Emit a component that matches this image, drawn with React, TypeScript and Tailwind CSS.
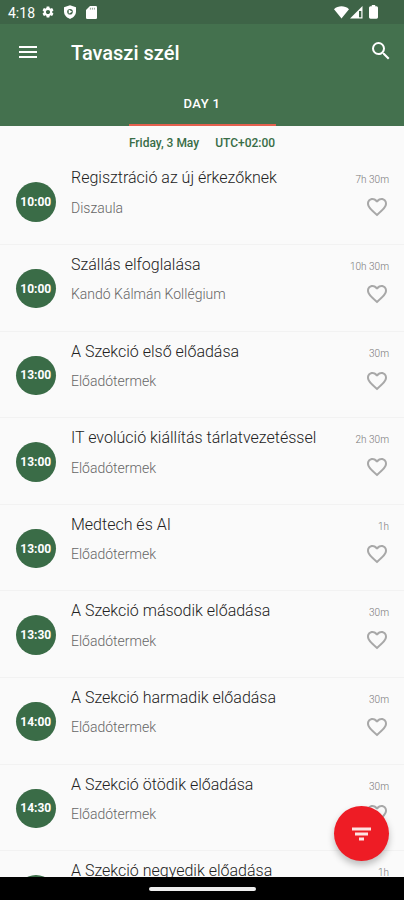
import React from "react";
import { MdSettings, MdSearch, MdMenu, MdFavoriteBorder } from "react-icons/md";

type Talk = { time?: string; title: string; place?: string; length: string };

const talks: Talk[] = [
  { time: "10:00", title: "Regisztráció az új érkezőknek", place: "Diszaula", length: "7h 30m" },
  { time: "10:00", title: "Szállás elfoglalása", place: "Kandó Kálmán Kollégium", length: "10h 30m" },
  { time: "13:00", title: "A Szekció első előadása", place: "Előadótermek", length: "30m" },
  { time: "13:00", title: "IT evolúció kiállítás tárlatvezetéssel", place: "Előadótermek", length: "2h 30m" },
  { time: "13:00", title: "Medtech és AI", place: "Előadótermek", length: "1h" },
  { time: "13:30", title: "A Szekció második előadása", place: "Előadótermek", length: "30m" },
  { time: "14:00", title: "A Szekció harmadik előadása", place: "Előadótermek", length: "30m" },
  { time: "14:30", title: "A Szekció ötödik előadása", place: "Előadótermek", length: "30m" },
  { title: "A Szekció negyedik előadása", length: "1h" },
];

function StatusBar() {
  return (
    <div className="flex h-6 shrink-0 items-center bg-[#3e6447] pl-2 pr-[26px] text-white">
      <span className="mt-px w-[27px] text-[14px] leading-6">4:18</span>
      <MdSettings className="ml-[6px] size-[14px]" />
      <svg className="ml-[8px] h-[14px] w-[14px]" viewBox="0 0 14 14">
        <path d="M7 0.2L13 2.3V6.6C13 10 10.5 12.8 7 13.9C3.5 12.8 1 10 1 6.6V2.3Z" fill="currentColor" />
        <circle cx="7" cy="6.7" r="2.8" fill="#3e6447" />
        <path d="M5.7 4.6L9.2 6.7L5.7 8.8Z" fill="currentColor" />
      </svg>
      <svg className="ml-[9px] h-[13px] w-[11px]" viewBox="0 0 11 13">
        <path d="M4 0H9.7Q11 0 11 1.3V11.7Q11 13 9.7 13H1.3Q0 13 0 11.7V4Z" fill="currentColor" />
        <path d="M4.4 1.8V3.6M6.4 1.8V3.6M8.4 1.8V3.6" stroke="#3e6447" strokeWidth=".6" />
      </svg>
      <div className="flex-1" />
      <svg className="h-[13px] w-[15px]" viewBox="0 0 15 13">
        <path d="M0 3.2C4.2-.6 10.8-.6 15 3.2L7.5 12.5Z" fill="currentColor" />
      </svg>
      <svg className="ml-[1px] h-[13px] w-[13px]" viewBox="0 0 13 13">
        <path d="M12.5 0V12.5H0Z" fill="currentColor" />
        <path d="M9 5H11.3V11.3H9Z" fill="#3e6447" />
      </svg>
      <svg className="ml-[6px] h-[14px] w-[9px]" viewBox="0 0 9 14">
        <path d="M2.8 0H6.2V1.3H7.5Q9 1.3 9 2.8V12.3Q9 13.7 7.5 13.7H1.5Q0 13.7 0 12.3V2.8Q0 1.3 1.5 1.3H2.8Z" fill="currentColor" />
      </svg>
    </div>
  );
}

function TalkRow({ talk }: { talk: Talk }) {
  return (
    <li className="flex h-[86.6px] shrink-0 border-b border-[#f2f2f2] pl-4 pr-[15px]">
      <div className="mt-6 flex size-[39.5px] shrink-0 items-center justify-center rounded-full bg-[#3a6c47] text-[12px] font-bold text-white">
        {talk.time}
      </div>
      <div className="ml-[15.5px] flex-1 whitespace-nowrap">
        <div className="mt-[10px] text-[16px] leading-5 font-light text-[#222]">{talk.title}</div>
        {talk.place && (
          <div className="mt-[9.5px] text-[14px] leading-5 font-light text-[#666]">{talk.place}</div>
        )}
      </div>
      <div className="flex flex-col items-end whitespace-nowrap">
        <div className="mt-[14px] text-[10px] leading-4 font-light text-[#777]">{talk.length}</div>
        <MdFavoriteBorder className="mt-[7px] size-[24px] text-[#a8a8a8]" />
      </div>
    </li>
  );
}

export default function App() {
  return (
    <div className="relative flex h-[900px] w-[404px] flex-col overflow-hidden bg-[#fafafa] font-['Roboto',sans-serif]">
      <StatusBar />
      <header className="h-[102px] shrink-0 bg-[#44714e] text-white">
        <div className="flex h-14 items-center pl-4 pr-[11.5px]">
          <MdMenu className="size-6" />
          <h1 className="mt-0.5 ml-[31px] flex-1 text-[20px] leading-6 font-medium">Tavaszi szél</h1>
          <MdSearch className="mb-0.5 size-6" />
        </div>
        <div className="mx-auto flex h-[46px] w-[147px] items-center justify-center border-b-[2.5px] border-[#e4604e] pt-[3px] text-[13px] tracking-[0.4px] font-medium">
          DAY 1
        </div>
      </header>
      <div className="flex h-[32.4px] shrink-0 justify-center gap-4 pt-[9px] text-[12px] leading-4 font-medium text-[#386d46]">
        <span>Friday, 3 May</span>
        <span>UTC+02:00</span>
      </div>
      <ul className="flex min-h-0 flex-1 flex-col overflow-hidden">
        {talks.map((talk, i) => (
          <TalkRow key={i} talk={talk} />
        ))}
      </ul>
      <div className="flex h-[23px] shrink-0 items-center justify-center bg-black">
        <div className="h-1 w-[107px] rounded-full bg-[#eee]" />
      </div>
      <button className="absolute top-[806px] left-[334px] flex size-[55px] items-center justify-center rounded-full bg-[#ee1c25] shadow-[0_4px_7px_rgba(0,0,0,0.25)]">
        <svg className="h-[14px] w-[19px]" viewBox="0 0 19 14">
          <path d="M0 .4H19V3.4H0ZM3 5.6H16V8.6H3ZM7 10.6H12V13.4H7Z" fill="#fde3e3" />
        </svg>
      </button>
    </div>
  );
}
